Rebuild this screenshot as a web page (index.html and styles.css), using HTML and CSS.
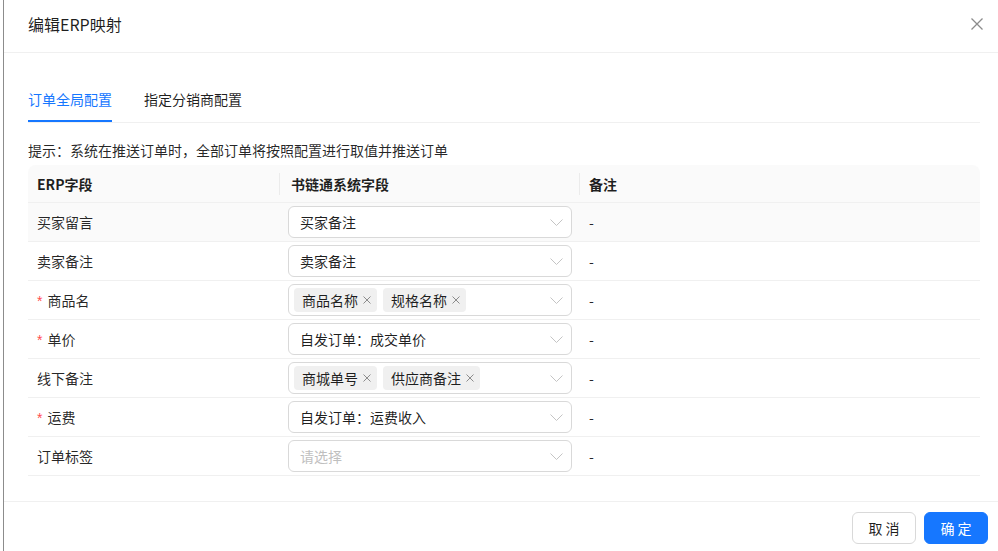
FILE: index.html
```html
<!DOCTYPE html>
<html lang="zh-CN">
<head>
<meta charset="utf-8">
<title>编辑ERP映射</title>
<link rel="stylesheet" href="styles.css">
</head>
<body>
<div class="modal">
  <div class="modal-header">
    <div class="modal-title">编辑ERP映射</div>
    <svg class="modal-close" width="12" height="12" viewBox="0 0 12 12"><path d="M0.5 0.5 L11.5 11.5 M11.5 0.5 L0.5 11.5" stroke="#8c8c8c" stroke-width="1.3" fill="none"/></svg>
  </div>
  <div class="modal-body">
    <div class="tabs">
      <div class="tab active">订单全局配置</div>
      <div class="tab">指定分销商配置</div>
    </div>
    <div class="hint">提示：系统在推送订单时，全部订单将按照配置进行取值并推送订单</div>
    <table class="map-table">
      <colgroup><col class="c1"><col class="c2"><col class="c3"></colgroup>
      <thead>
        <tr><th>ERP字段</th><th class="th2">书链通系统字段</th><th>备注</th></tr>
      </thead>
      <tbody>
        <tr class="hover">
          <td>买家留言</td>
          <td class="sel-cell"><div class="select"><span class="val">买家备注</span><svg class="arrow" width="13" height="7" viewBox="0 0 13 7"><polyline points="0.5,0.5 6.5,6.5 12.5,0.5" stroke="#c4c4c4" stroke-width="1" fill="none"/></svg></div></td>
          <td>-</td>
        </tr>
        <tr>
          <td>卖家备注</td>
          <td class="sel-cell"><div class="select"><span class="val">卖家备注</span><svg class="arrow" width="13" height="7" viewBox="0 0 13 7"><polyline points="0.5,0.5 6.5,6.5 12.5,0.5" stroke="#c4c4c4" stroke-width="1" fill="none"/></svg></div></td>
          <td>-</td>
        </tr>
        <tr>
          <td><span class="req">*</span>商品名</td>
          <td class="sel-cell"><div class="select multi"><span class="tag">商品名称<svg class="tag-x" width="8" height="8" viewBox="0 0 8 8"><path d="M0.5 0.5 L7.5 7.5 M7.5 0.5 L0.5 7.5" stroke="#8c8c8c" stroke-width="1" fill="none"/></svg></span><span class="tag">规格名称<svg class="tag-x" width="8" height="8" viewBox="0 0 8 8"><path d="M0.5 0.5 L7.5 7.5 M7.5 0.5 L0.5 7.5" stroke="#8c8c8c" stroke-width="1" fill="none"/></svg></span><svg class="arrow" width="13" height="7" viewBox="0 0 13 7"><polyline points="0.5,0.5 6.5,6.5 12.5,0.5" stroke="#c4c4c4" stroke-width="1" fill="none"/></svg></div></td>
          <td>-</td>
        </tr>
        <tr>
          <td><span class="req">*</span>单价</td>
          <td class="sel-cell"><div class="select"><span class="val">自发订单：成交单价</span><svg class="arrow" width="13" height="7" viewBox="0 0 13 7"><polyline points="0.5,0.5 6.5,6.5 12.5,0.5" stroke="#c4c4c4" stroke-width="1" fill="none"/></svg></div></td>
          <td>-</td>
        </tr>
        <tr>
          <td>线下备注</td>
          <td class="sel-cell"><div class="select multi"><span class="tag">商城单号<svg class="tag-x" width="8" height="8" viewBox="0 0 8 8"><path d="M0.5 0.5 L7.5 7.5 M7.5 0.5 L0.5 7.5" stroke="#8c8c8c" stroke-width="1" fill="none"/></svg></span><span class="tag">供应商备注<svg class="tag-x" width="8" height="8" viewBox="0 0 8 8"><path d="M0.5 0.5 L7.5 7.5 M7.5 0.5 L0.5 7.5" stroke="#8c8c8c" stroke-width="1" fill="none"/></svg></span><svg class="arrow" width="13" height="7" viewBox="0 0 13 7"><polyline points="0.5,0.5 6.5,6.5 12.5,0.5" stroke="#c4c4c4" stroke-width="1" fill="none"/></svg></div></td>
          <td>-</td>
        </tr>
        <tr>
          <td><span class="req">*</span>运费</td>
          <td class="sel-cell"><div class="select"><span class="val">自发订单：运费收入</span><svg class="arrow" width="13" height="7" viewBox="0 0 13 7"><polyline points="0.5,0.5 6.5,6.5 12.5,0.5" stroke="#c4c4c4" stroke-width="1" fill="none"/></svg></div></td>
          <td>-</td>
        </tr>
        <tr>
          <td>订单标签</td>
          <td class="sel-cell"><div class="select"><span class="val placeholder">请选择</span><svg class="arrow" width="13" height="7" viewBox="0 0 13 7"><polyline points="0.5,0.5 6.5,6.5 12.5,0.5" stroke="#c4c4c4" stroke-width="1" fill="none"/></svg></div></td>
          <td>-</td>
        </tr>
      </tbody>
    </table>
  </div>
  <div class="modal-footer">
    <button class="btn">取 消</button>
    <button class="btn primary">确 定</button>
  </div>
</div>
</body>
</html>
```
FILE: styles.css
```css
html, body {
  margin: 0;
  padding: 0;
  background: #ffffff;
}
body {
  font-family: "Noto Sans CJK SC", "Noto Sans", "Liberation Sans", sans-serif;
  font-size: 14px;
  color: rgba(0, 0, 0, 0.85);
}
.modal {
  margin-left: 3px;
  border-left: 1px solid #8c8c8c;
  min-height: 551px;
  box-sizing: border-box;
}
.modal-header {
  height: 53px;
  border-bottom: 1px solid #f0f0f0;
  display: flex;
  align-items: center;
  justify-content: space-between;
  padding: 0 15px 4px 24px;
  box-sizing: border-box;
}
.modal-title {
  font-size: 16px;
  line-height: 24px;
  color: rgba(0, 0, 0, 0.88);
}
.modal-close {
  display: block;
}
.modal-body {
  padding: 23px 18px 25px 24px;
}
.tabs {
  display: flex;
  gap: 32px;
  border-bottom: 1px solid #f0f0f0;
  margin-bottom: 16px;
}
.tab {
  position: relative;
  padding: 12px 0;
  line-height: 22px;
  color: rgba(0, 0, 0, 0.88);
}
.tab.active {
  color: #1677ff;
}
.tab.active::after {
  content: "";
  position: absolute;
  left: 0;
  right: 0;
  bottom: 0;
  height: 2px;
  background: #1677ff;
}
.hint {
  line-height: 22px;
  margin-bottom: 4px;
  color: rgba(0, 0, 0, 0.85);
}
.map-table {
  width: 952px;
  border-collapse: separate;
  border-spacing: 0;
  table-layout: fixed;
}
.c1 { width: 252px; }
.c2 { width: 300px; }
.c3 { width: 400px; }
.map-table th {
  position: relative;
  height: 38px;
  box-sizing: border-box;
  padding: 0 9px;
  text-align: left;
  font-weight: 600;
  background: #fafafa;
  border-bottom: 1px solid #f0f0f0;
  color: rgba(0, 0, 0, 0.88);
}
.map-table th.th2 {
  padding-left: 11px;
}
.map-table th:first-child {
  border-top-left-radius: 8px;
}
.map-table th:last-child {
  border-top-right-radius: 8px;
}
.map-table th:not(:last-child)::before {
  content: "";
  position: absolute;
  right: 0;
  top: 50%;
  transform: translateY(-50%);
  width: 1px;
  height: 22px;
  background: #ebebeb;
}
.map-table td {
  height: 39px;
  padding: 0 9px;
  border-bottom: 1px solid #f0f0f0;
  box-sizing: border-box;
}
.map-table td.sel-cell {
  padding: 0 8px;
}
.map-table tr.hover td {
  background: #fafafa;
}
.req {
  color: #ff4d4f;
  margin-right: 5px;
  font-family: "Liberation Sans", sans-serif;
}
.select {
  height: 32px;
  box-sizing: border-box;
  border: 1px solid #d9d9d9;
  border-radius: 6px;
  background: #ffffff;
  display: flex;
  align-items: center;
  padding: 0 8px 0 11px;
}
.select.multi {
  padding-left: 5px;
  gap: 6px;
}
.val {
  line-height: 22px;
  color: rgba(0, 0, 0, 0.88);
}
.val.placeholder {
  color: #bfbfbf;
}
.arrow {
  margin-left: auto;
  display: block;
}
.tag {
  display: flex;
  align-items: center;
  height: 24px;
  line-height: 22px;
  padding: 0 6px 0 8px;
  background: #f0f0f0;
  border-radius: 4px;
  color: rgba(0, 0, 0, 0.88);
  box-sizing: border-box;
}
.tag-x {
  margin-left: 5px;
  display: block;
}
.modal-footer {
  border-top: 1px solid #f0f0f0;
  display: flex;
  justify-content: flex-end;
  gap: 8px;
  padding: 10px 10px;
}
.btn {
  width: 64px;
  height: 32px;
  border: 1px solid #d9d9d9;
  border-radius: 6px;
  background: #ffffff;
  font-family: inherit;
  font-size: 14px;
  color: rgba(0, 0, 0, 0.88);
  padding: 0;
}
.btn.primary {
  background: #1677ff;
  border-color: #1677ff;
  color: #ffffff;
}
```
